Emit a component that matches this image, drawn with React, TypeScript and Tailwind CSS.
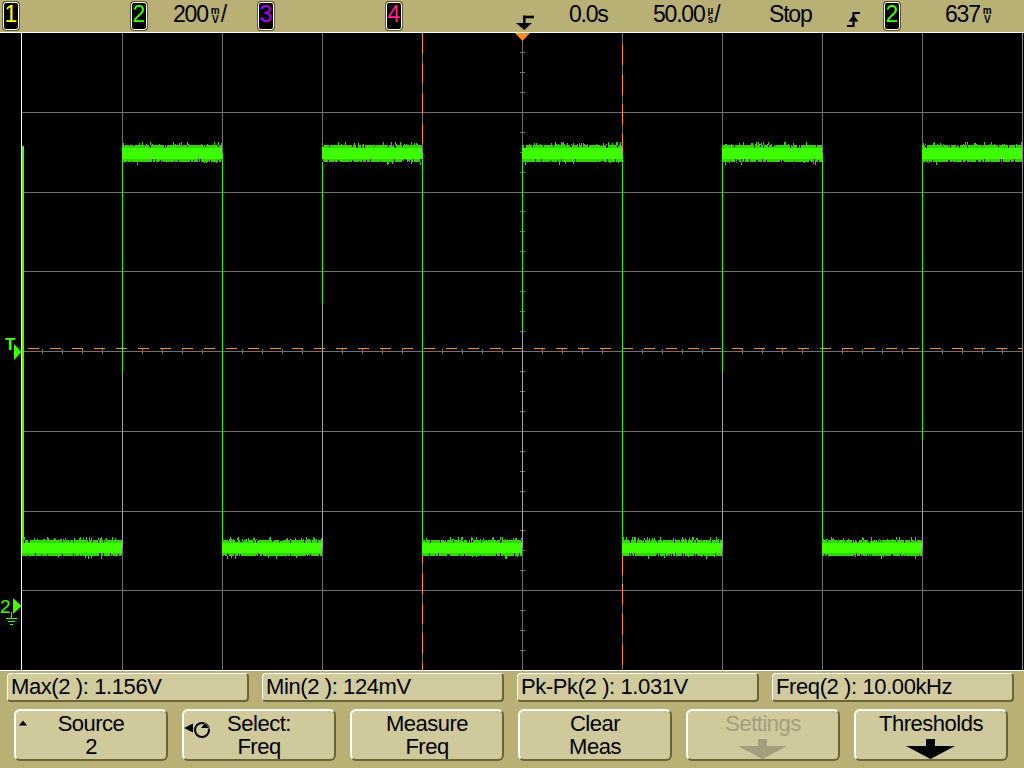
import React from 'react'

// seeded random so the trace noise is the same on every render
function makeRand(seed: number) {
  let s = seed >>> 0
  return () => {
    s = (s * 1664525 + 1013904223) >>> 0
    return s / 4294967296
  }
}

const rand = makeRand(12345)

type Band = { x0: number; x1: number; glowTop: number; coreTop: number; coreBot: number; glowBot: number }

const HIGH = { glowTop: 113, coreTop: 116, coreBot: 127, glowBot: 130 }
const LOW = { glowTop: 508, coreTop: 511, coreBot: 521, glowBot: 524 }

const bands: Band[] = [
  { x0: 22, x1: 122, ...LOW },
  { x0: 122, x1: 222, ...HIGH },
  { x0: 222, x1: 322, ...LOW },
  { x0: 322, x1: 422, ...HIGH },
  { x0: 422, x1: 522, ...LOW },
  { x0: 522, x1: 622, ...HIGH },
  { x0: 622, x1: 722, ...LOW },
  { x0: 722, x1: 822, ...HIGH },
  { x0: 822, x1: 922, ...LOW },
  { x0: 922, x1: 1022, ...HIGH },
]

function buildNoise() {
  let spikes = ''
  let notches = ''
  for (const b of bands) {
    for (let x = b.x0; x < b.x1; x++) {
      if (rand() < 0.22) {
        const h = 1 + Math.floor(rand() * 3)
        spikes += `M${x} ${b.glowTop - h}h1v${h}h-1z`
      }
      if (rand() < 0.08) {
        const h = 1 + Math.floor(rand() * 3)
        spikes += `M${x} ${b.glowBot}h1v${h}h-1z`
      }
      if (rand() < 0.16) {
        const h = 1 + Math.floor(rand() * 3)
        notches += `M${x} ${b.glowTop}h1v${h}h-1z`
      }
      if (rand() < 0.16) {
        const h = 1 + Math.floor(rand() * 3)
        notches += `M${x} ${b.glowBot - h}h1v${h}h-1z`
      }
    }
  }
  return { spikes, notches }
}

const noise = buildNoise()

const HLINES = [1, 2, 3, 5, 6, 7].map((k) => Math.round(k * 79.75))
const VLINES = [122, 222, 322, 422, 522, 622, 722, 822, 922]

// rising edges: x, where the bright part ends
const RISING = [
  { x: 122, end: 341 },
  { x: 322, end: 271 },
  { x: 522, end: 298 },
  { x: 722, end: 340 },
  { x: 922, end: 408 },
]
const FALLING = [222, 422, 622, 822]

function Display() {
  const vTicks: number[] = []
  for (let k = 1; k < 32; k++) vTicks.push(Math.round((k * 79.75) / 4))
  const hTicks: number[] = []
  for (let x = 42; x < 1022; x += 20) hTicks.push(x)

  return (
    <div className="h-[639px] bg-black">
      <svg width="1024" height="639" className="block">
        {/* graticule */}
        {HLINES.map((y) => (
          <line key={'h' + y} x1="22" x2="1022" y1={y + 0.5} y2={y + 0.5} stroke="#6f6f6f" />
        ))}
        <line x1="22" x2="1022" y1="319.5" y2="319.5" stroke="#6f6f6f" />
        {VLINES.map((x) => (
          <line key={'v' + x} x1={x + 0.5} x2={x + 0.5} y1="0" y2="639" stroke="#6f6f6f" />
        ))}
        <line x1="1022.5" x2="1022.5" y1="0" y2="639" stroke="#8a8a8a" />
        {vTicks.map((y) => (
          <line key={'vt' + y} x1="520" x2="525" y1={y + 0.5} y2={y + 0.5} stroke="#6f6f6f" />
        ))}
        {hTicks.map((x) => (
          <line key={'ht' + x} x1={x + 0.5} x2={x + 0.5} y1="317" y2="322" stroke="#6f6f6f" />
        ))}
        <line x1="0" x2="1024" y1="0.5" y2="0.5" stroke="#ffffff" />
        <line x1="0" x2="1024" y1="638.5" y2="638.5" stroke="#ffffff" />
        <line x1="21.5" x2="21.5" y1="0" y2="639" stroke="#ffffff" />

        {/* cursors */}
        <line x1="28" x2="1022" y1="316.5" y2="316.5" stroke="#ff8a1c" strokeDasharray="11 11" />
        <line x1="422.5" x2="422.5" y1="1" y2="638" stroke="#ff8a1c" strokeDasharray="21 9" />
        <line x1="622.5" x2="622.5" y1="12" y2="638" stroke="#ff8a1c" strokeDasharray="21 9" />

        {/* trace */}
        {RISING.map((r) => (
          <g key={'r' + r.x}>
            <line x1={r.x + 0.5} x2={r.x + 0.5} y1={r.end} y2="516" stroke="#a3a3a3" />
            <line x1={r.x + 0.5} x2={r.x + 0.5} y1="121" y2={r.end} stroke="#35f000" />
          </g>
        ))}
        {FALLING.map((x) => (
          <line key={'f' + x} x1={x + 0.5} x2={x + 0.5} y1="121" y2="516" stroke="#35f000" />
        ))}
        <rect x="22" y="114" width="2" height="410" fill="#3cff00" />
        {bands.map((b) => (
          <g key={'b' + b.x0}>
            <rect x={b.x0} y={b.glowTop} width={b.x1 - b.x0} height={b.glowBot - b.glowTop} fill="#2fd600" />
            <rect x={b.x0} y={b.coreTop} width={b.x1 - b.x0} height={b.coreBot - b.coreTop} fill="#3dff00" />
          </g>
        ))}
        <path d={noise.spikes} fill="#2fd600" />
        <path d={noise.notches} fill="#000000" />

        {/* trigger position marker */}
        <polygon points="515,1 530,1 522.5,9" fill="#ff8a1c" />

        {/* trigger level marker */}
        <text x="5" y="318" fill="#3cff00" fontSize="17" fontFamily="Liberation Sans, Arial, sans-serif" fontWeight="bold">
          T
        </text>
        <polygon points="14,312 14,328 21.5,320" fill="#3cff00" />

        {/* ch2 ground marker */}
        <text x="0" y="581" fill="#3cff00" fontSize="19" fontFamily="Liberation Sans, Arial, sans-serif">
          2
        </text>
        <polygon points="13,566 13,582 21.5,574" fill="#3cff00" />
        <path d="M11.5 580v6M6 586.5h11M8 589.5h7M10 592.5h3" stroke="#3cff00" strokeWidth="1" />
      </svg>
    </div>
  )
}

function ChanBox({ n, color }: { n: string; color: string }) {
  return (
    <div
      className={`flex h-[28px] w-[16px] justify-center rounded-[3px] border border-white bg-black text-[23px] leading-none tracking-normal shadow-[0_0_0_1px_#5f5733] ${color}`}
    >
      <span>{n}</span>
    </div>
  )
}

function Stack({ top, bottom }: { top: string; bottom: string }) {
  return (
    <span className="mr-[1px] ml-[3px] mt-[3px] inline-flex flex-col items-center text-[10px] font-bold leading-[9px] tracking-normal">
      <span>{top}</span>
      <span>{bottom}</span>
    </span>
  )
}

function TopBar() {
  return (
    <div className="flex h-[32px] items-start pt-[2px] text-[23px] leading-none">
      <div className="w-[3px] shrink-0" />
      <div className="w-[128px] shrink-0">
        <ChanBox n="1" color="text-[#ffff00]" />
      </div>
      <div className="w-[42px] shrink-0">
        <ChanBox n="2" color="text-[#3cff00]" />
      </div>
      <div className="flex w-[85px] shrink-0 pt-[1px]">
        <span className="tracking-[-1.2px]">200</span>
        <Stack top="m" bottom="V" />
        <span>/</span>
      </div>
      <div className="w-[128px] shrink-0">
        <ChanBox n="3" color="text-[#b000ff]" />
      </div>
      <div className="w-[129px] shrink-0">
        <ChanBox n="4" color="text-[#ff1f8e]" />
      </div>
      <div className="w-[54px] shrink-0">
        <svg width="19" height="16" className="mt-[13px] block">
          <rect x="8" y="0.7" width="11" height="2.6" fill="#000" />
          <rect x="8" y="0.7" width="2.6" height="9" fill="#000" />
          <polygon points="1,8 17,8 9.3,15" fill="#000" />
        </svg>
      </div>
      <div className="w-[84px] shrink-0 pt-[1px] tracking-[-1.2px]">0.0s</div>
      <div className="flex w-[116px] shrink-0 pt-[1px]">
        <span className="tracking-[-1.2px]">50.00</span>
        <Stack top="µ" bottom="s" />
        <span>/</span>
      </div>
      <div className="w-[78px] shrink-0 pt-[1px] tracking-[-1.2px]">Stop</div>
      <div className="w-[37px] shrink-0">
        <svg width="14" height="17" className="mt-[9px] block">
          <path d="M0 15H6.5V2H13" stroke="#000" strokeWidth="2.2" fill="none" />
          <polygon points="1.5,10.5 11.5,10.5 6.5,4" fill="#000" />
        </svg>
      </div>
      <div className="w-[61px] shrink-0">
        <ChanBox n="2" color="text-[#3cff00]" />
      </div>
      <div className="flex shrink-0 pt-[1px]">
        <span className="tracking-[-1.2px]">637</span>
        <Stack top="m" bottom="V" />
      </div>
    </div>
  )
}

function Meas({ text }: { text: string }) {
  return (
    <div className="flex h-[29px] w-[242px] items-center rounded-[4px] border-t border-l border-r-2 border-b-2 border-t-white border-l-white border-r-[#6b6339] border-b-[#6b6339] bg-[#d0ca9c] pl-[3px] text-[22px] leading-none tracking-[-0.4px]">
      {text}
    </div>
  )
}

function DownArrow({ color }: { color: string }) {
  return (
    <svg width="50" height="20" className="mt-[4px] block">
      <rect x="20" y="0" width="9" height="7" fill={color} />
      <polygon points="0,7 49,7 24.5,20" fill={color} />
    </svg>
  )
}

function Key({ children, icon }: { children: React.ReactNode; icon?: React.ReactNode }) {
  return (
    <div className="relative flex h-[52px] w-[154px] flex-col items-center rounded-[6px] border-t-2 border-l-2 border-r-2 border-b-2 border-t-white border-l-white border-r-[#6b6339] border-b-[#6b6339] bg-[#cfc99b] pt-[1px] text-[22px] leading-[23px] tracking-[-0.5px]">
      {icon}
      {children}
    </div>
  )
}

function BottomPanel() {
  return (
    <div className="flex h-[97px] flex-col">
      <div className="mt-[2px] flex gap-[13px] pl-[7px]">
        <Meas text="Max(2 ): 1.156V" />
        <Meas text="Min(2 ): 124mV" />
        <Meas text="Pk-Pk(2 ): 1.031V" />
        <Meas text="Freq(2 ): 10.00kHz" />
      </div>
      <div className="mt-[7px] flex gap-[14px] pl-[14px]">
        <Key
          icon={
            <svg width="8" height="6" className="absolute top-[9px] left-[3px]">
              <polygon points="0,5.5 8,5.5 4,0.5" fill="#000" />
            </svg>
          }
        >
          <span>Source</span>
          <span>2</span>
        </Key>
        <Key
          icon={
            <svg width="30" height="19" className="absolute top-[9px] left-[0px]">
              <circle cx="18" cy="10" r="7" stroke="#000" strokeWidth="2" fill="none" />
              <polygon points="0,8 9,3.5 9,12.5" fill="#000" />
              <polygon points="16,8.5 26,8.5 21,2.5" fill="#cfc99b" />
              <polygon points="17,8 25,8 21,3" fill="#000" />
            </svg>
          }
        >
          <span>Select:</span>
          <span>Freq</span>
        </Key>
        <Key>
          <span>Measure</span>
          <span>Freq</span>
        </Key>
        <Key>
          <span>Clear</span>
          <span>Meas</span>
        </Key>
        <Key>
          <span className="text-[#a29e7e]">Settings</span>
          <DownArrow color="#a29e7e" />
        </Key>
        <Key>
          <span>Thresholds</span>
          <DownArrow color="#000000" />
        </Key>
      </div>
    </div>
  )
}

export default function App() {
  return (
    <div className="h-[768px] w-[1024px] overflow-hidden bg-[#b9b075] font-[Liberation_Sans,Arial,sans-serif] text-black">
      <TopBar />
      <Display />
      <BottomPanel />
    </div>
  )
}
